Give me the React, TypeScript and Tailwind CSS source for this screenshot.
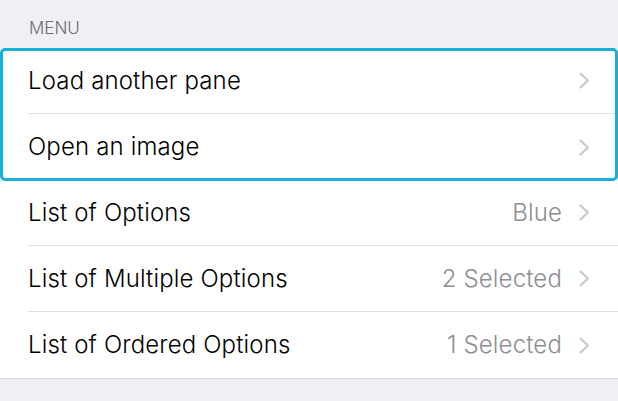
import React from 'react'

type Row = { label: string; value?: string }

const focused: Row[] = [{ label: 'Load another pane' }, { label: 'Open an image' }]
const rest: Row[] = [
  { label: 'List of Options', value: 'Blue' },
  { label: 'List of Multiple Options', value: '2 Selected' },
  { label: 'List of Ordered Options', value: '1 Selected' },
]

function Chevron() {
  return (
    <svg width="11" height="17" viewBox="0 0 11 17" className="shrink-0">
      <path d="M1.5 1.5 L9 8.5 L1.5 15.5" fill="none" stroke="#c7c7cc" strokeWidth="2" strokeLinecap="round" strokeLinejoin="round" />
    </svg>
  )
}

function MenuRow({ row, last }: { row: Row; last?: boolean }) {
  return (
    <div className="pl-[28px] bg-white">
      <div className={`h-[66px] flex items-center pr-[28px] ${last ? '' : 'border-b border-[#e0e0e3]'}`}>
        <span className="flex-1 text-[24px] font-light tracking-[0.15px] text-black">{row.label}</span>
        {row.value && <span className="text-[24px] font-light tracking-[0.15px] text-[#8e8e93] mr-[17px]">{row.value}</span>}
        <Chevron />
      </div>
    </div>
  )
}

export default function App() {
  return (
    <div className="w-[618px] h-[401px] bg-[#efeff4] overflow-hidden" style={{ fontFamily: 'Inter, "Noto Sans", sans-serif' }}>
      <div className="pl-[29px] pt-[16px] h-[48px] text-[17px] font-light text-[#6d6d72] uppercase">Menu</div>
      <div className="border-b border-[#d8d8dc]">
        <div className="relative">
          {focused.map((r, i) => (
            <MenuRow key={r.label} row={r} last={i === focused.length - 1} />
          ))}
          <div className="absolute inset-x-0 top-0 -bottom-px border-[3px] border-[#19aedb] rounded-[5px] pointer-events-none" />
        </div>
        {rest.map((r, i) => (
          <MenuRow key={r.label} row={r} last={i === rest.length - 1} />
        ))}
      </div>
    </div>
  )
}
